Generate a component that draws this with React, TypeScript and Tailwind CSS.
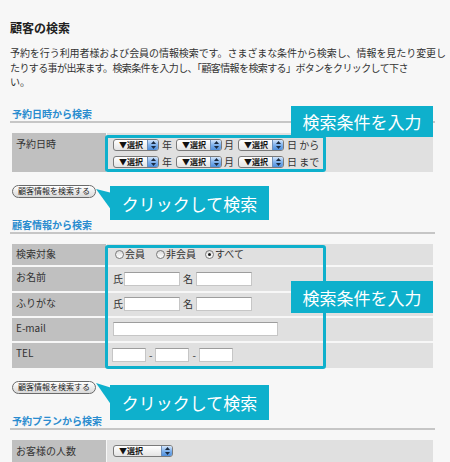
import React from "react";

const Sel = ({ w = 46 }: { w?: number }) => (
  <div
    className="relative h-[12px] rounded-[3px] border border-[#7a7a7a] bg-linear-to-b from-white to-[#e4e4e4] flex items-center shrink-0"
    style={{ width: w }}
  >
    <span className="text-[8px] font-bold leading-none pl-[5px] text-[#111] whitespace-nowrap">▼選択</span>
    <div className="absolute right-0 top-0 bottom-0 w-[11px] rounded-r-[2px] border-l border-[#6f8fb8] bg-linear-to-b from-[#d4e6fb] via-[#7fb1ec] to-[#4f8fdc] flex items-center justify-center">
      <svg width="5" height="8" viewBox="0 0 5 8">
        <polygon points="2.5,0 5,3 0,3" fill="#1a2a40" />
        <polygon points="0,5 5,5 2.5,8" fill="#1a2a40" />
      </svg>
    </div>
  </div>
);

const Inp = ({ w }: { w: number }) => (
  <input
    readOnly
    className="h-[14px] bg-white border border-[#c6c6c6] border-t-[#9d9d9d] shrink-0 outline-none"
    style={{ width: w }}
  />
);

const Radio = ({ checked = false }: { checked?: boolean }) => (
  <span className="relative inline-block w-[9px] h-[9px] rounded-full border border-[#7a7a7a] bg-linear-to-b from-[#dcdcdc] to-white shrink-0">
    {checked && <span className="absolute left-[2px] top-[2px] w-[3px] h-[3px] rounded-full bg-[#1a1a1a]" />}
  </span>
);

const Btn = () => (
  <div className="h-[13px] w-[84px] rounded-full border border-[#6a6a6a] bg-linear-to-b from-white to-[#d9d9d9] text-[8px] leading-none text-[#222] flex items-center justify-center whitespace-nowrap">
    顧客情報を検索する
  </div>
);

const Heading = ({ children, mt }: { children: React.ReactNode; mt: string }) => (
  <div className={`${mt} text-[10px] leading-[12px] font-bold text-[#2a8ccf] pl-[2px] pb-[1px] border-b-2 border-[#c6c6c6]`}>
    {children}
  </div>
);

const Label = ({ children }: { children: React.ReactNode }) => (
  <div className="w-[94px] shrink-0 bg-[#c0c0c0] pl-[4px] pt-[3px] text-[10px] leading-[14px] text-[#333]">{children}</div>
);

const Callout = ({ text, cls }: { text: string; cls: string }) => (
  <div className={`absolute ${cls} bg-[#0eb0cc] text-white text-[17px] leading-none flex items-center justify-center whitespace-nowrap`}>
    {text}
  </div>
);

export default function App() {
  return (
    <div className="relative w-[450px] h-[462px] overflow-hidden bg-[#f7f7f7] text-[#333] font-['Noto_Sans_CJK_JP','Liberation_Sans',sans-serif]">
      <div className="pl-[10px] w-[435px]">
        <div className="pt-[20px] text-[12px] leading-[16px] font-bold text-[#222]">顧客の検索</div>
        <div className="mt-[10px] text-[10px] leading-[14.5px] whitespace-nowrap">
          <div className="tracking-[-0.07px]">予約を行う利用者様および会員の情報検索です。さまざまな条件から検索し、情報を見たり変更し</div>
          <div className="tracking-[-0.6px]">たりする事が出来ます。検索条件を入力し、「顧客情報を検索する」ボタンをクリックして下さ</div>
          <div>い。</div>
        </div>

        <Heading mt="mt-[18px]">予約日時から検索</Heading>

        <div className="relative ml-[2px] w-[421px] h-[39px] mt-[10px] flex">
          <div className="w-[94px] shrink-0 bg-[#c0c0c0] pl-[4px] pt-[4px] text-[10px] leading-[14px]">予約日時</div>
          <div className="flex-1 ml-[1px] bg-[#e0e0e0] pl-[6px] pt-[6px] flex flex-col gap-[5px] text-[10px] leading-[12px]">
            {["から", "まで"].map((t) => (
              <div key={t} className="flex items-center h-[12px] whitespace-nowrap">
                <Sel />
                <span className="ml-[3px] mr-[4px]">年</span>
                <Sel />
                <span className="ml-[2px] mr-[4px]">月</span>
                <Sel />
                <span className="ml-[3px]">日 {t}</span>
              </div>
            ))}
          </div>
          <div className="absolute left-[93px] top-[2px] w-[221px] h-[37px] border-[3px] border-[#0eb0cc] rounded-[3px]" />
        </div>

        <div className="mt-[13px] ml-[2px]">
          <Btn />
        </div>

        <Heading mt="mt-[21px]">顧客情報から検索</Heading>

        <div className="relative ml-[2px] w-[421px] mt-[10px] flex flex-col gap-[2px] text-[10px] leading-[14px]">
          <div className="flex h-[21px]">
            <Label>検索対象</Label>
            <div className="flex-1 ml-[1px] bg-[#e0e0e0] pl-[8px] flex items-center whitespace-nowrap">
              <Radio />
              <span className="ml-[1px]">会員</span>
              <span className="ml-[11px] flex items-center">
                <Radio />
                <span className="ml-[1px]">非会員</span>
              </span>
              <span className="ml-[9px] flex items-center">
                <Radio checked />
                <span className="ml-[1px]">すべて</span>
              </span>
            </div>
          </div>
          {["お名前", "ふりがな"].map((l, i) => (
            <div key={l} className={`flex ${i === 0 ? "h-[24px]" : "h-[23px]"}`}>
              <Label>{l}</Label>
              <div className="flex-1 ml-[1px] bg-[#e0e0e0] pl-[6px] flex items-center whitespace-nowrap">
                <span>氏</span>
                <span className="ml-[1px] flex"><Inp w={56} /></span>
                <span className="ml-[3px]">名</span>
                <span className="ml-[3px] flex"><Inp w={56} /></span>
              </div>
            </div>
          ))}
          <div className="flex h-[23px]">
            <Label>E-mail</Label>
            <div className="flex-1 ml-[1px] bg-[#e0e0e0] pl-[6px] flex items-center">
              <Inp w={165} />
            </div>
          </div>
          <div className="flex h-[25px]">
            <Label>TEL</Label>
            <div className="flex-1 ml-[1px] bg-[#e0e0e0] pl-[5px] flex items-center">
              <Inp w={34} />
              <span className="mx-[3px]">-</span>
              <Inp w={34} />
              <span className="mx-[3px]">-</span>
              <Inp w={34} />
            </div>
          </div>
          <div className="absolute left-[93px] top-[1px] w-[221px] h-[124px] border-[3px] border-[#0eb0cc] rounded-[3px]" />
        </div>

        <div className="mt-[13px] ml-[2px]">
          <Btn />
        </div>

        <Heading mt="mt-[21px]">予約プランから検索</Heading>

        <div className="ml-[2px] w-[421px] mt-[10px] flex h-[30px] text-[10px] leading-[14px]">
          <div className="w-[94px] shrink-0 bg-[#c0c0c0] pl-[4px] pt-[4px]">お客様の人数</div>
          <div className="flex-1 ml-[1px] bg-[#e0e0e0] pl-[6px] pt-[5px]">
            <Sel w={60} />
          </div>
        </div>
      </div>

      <Callout text="検索条件を入力" cls="left-[291px] top-[106px] w-[142px] h-[31px]" />
      <Callout text="検索条件を入力" cls="left-[291px] top-[281px] w-[142px] h-[32px]" />

      <svg className="absolute left-[94px] top-[186px]" width="18" height="28" viewBox="0 0 18 28">
        <polygon points="2,3 18,7 18,25" fill="#0eb0cc" />
      </svg>
      <Callout text="クリックして検索" cls="left-[110px] top-[186px] w-[159px] h-[34px]" />

      <svg className="absolute left-[94px] top-[380px]" width="18" height="30" viewBox="0 0 18 30">
        <polygon points="2,3 18,8 18,26" fill="#0eb0cc" />
      </svg>
      <Callout text="クリックして検索" cls="left-[110px] top-[385px] w-[159px] h-[35px]" />
    </div>
  );
}
